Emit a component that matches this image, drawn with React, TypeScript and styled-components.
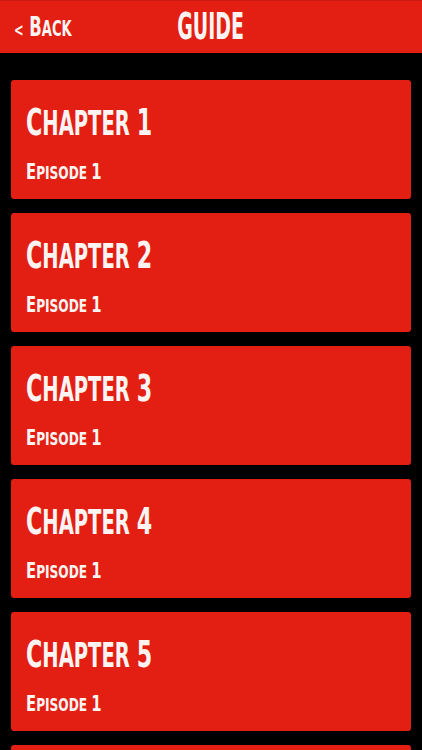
import React from "react";
import styled, { createGlobalStyle } from "styled-components";

const GlobalStyle = createGlobalStyle`
  html, body {
    margin: 0;
    padding: 0;
    background: #000;
  }
  body {
    font-family: "DejaVu Sans Condensed", "Liberation Sans Narrow", "Liberation Sans", sans-serif;
    font-weight: bold;
  }
`;

const RED = "#e21f12";

const Screen = styled.div`
  width: 422px;
  height: 750px;
  background: #000;
  overflow: hidden;
`;

const Header = styled.div`
  height: 53px;
  background: ${RED};
  border-top: 1px solid #c81a10;
  box-sizing: border-box;
  display: grid;
  grid-template-columns: 1fr auto 1fr;
  align-items: center;
  color: #fbf4f2;
`;

const Back = styled.div`
  padding-left: 14px;
  font-size: 26px;
  line-height: 1;
  display: flex;
  align-items: baseline;
`;

const Condensed = styled.span<{ $scale: number; $origin?: string }>`
  display: inline-block;
  transform: scaleX(${(p) => p.$scale});
  transform-origin: ${(p) => p.$origin ?? "left"} center;
  white-space: nowrap;
`;

const HeaderTitle = styled.div`
  font-size: 37px;
  line-height: 1;
  text-align: center;
  margin-top: -2px;
`;

const List = styled.div`
  display: flex;
  flex-direction: column;
  gap: 14px;
  padding: 27px 11px 0 11px;
`;

const Card = styled.div`
  height: 119px;
  flex-shrink: 0;
  background: ${RED};
  border-radius: 3px;
  box-sizing: border-box;
  padding: 23px 15px 0 15px;
  color: #fbf4f2;
`;

const Title = styled.div<{ $size: number }>`
  font-size: ${(p) => p.$size}px;
  line-height: 1;
`;

const Small = styled.span<{ $ratio: number }>`
  font-size: ${(p) => p.$ratio}em;
`;

const Sub = styled(Title)`
  margin-top: 20px;
`;

function SmallCaps({ text, ratio }: { text: string; ratio: number }) {
  const parts: React.ReactNode[] = [];
  let buf = "";
  let lower = false;
  const flush = (k: number) => {
    if (!buf) return;
    parts.push(lower ? <Small key={k} $ratio={ratio}>{buf.toUpperCase()}</Small> : buf);
    buf = "";
  };
  text.split("").forEach((ch, i) => {
    const isLower = ch !== ch.toUpperCase();
    const isSpace = ch === " ";
    if (!isSpace && isLower !== lower) {
      flush(i);
      lower = isLower;
    }
    buf += ch;
  });
  flush(text.length);
  return <>{parts}</>;
}

const chapters = [1, 2, 3, 4, 5];

export default function App() {
  return (
    <Screen>
      <GlobalStyle />
      <Header>
        <Back>
          <Condensed $scale={0.7}>
            <Small $ratio={0.7}>&lt;</Small> <SmallCaps text="Back" ratio={0.8} />
          </Condensed>
        </Back>
        <HeaderTitle>
          <Condensed $scale={0.57} $origin="center">GUIDE</Condensed>
        </HeaderTitle>
        <div />
      </Header>
      <List>
        {chapters.map((n) => (
          <Card key={n}>
            <Title $size={38}>
              <Condensed $scale={0.65}>
                <SmallCaps text={`Chapter ${n}`} ratio={0.88} />
              </Condensed>
            </Title>
            <Sub $size={22}>
              <Condensed $scale={0.75}>
                <SmallCaps text="Episode 1" ratio={0.82} />
              </Condensed>
            </Sub>
          </Card>
        ))}
        {/* next card peeks in at the bottom edge */}
        <Card />
      </List>
    </Screen>
  );
}
